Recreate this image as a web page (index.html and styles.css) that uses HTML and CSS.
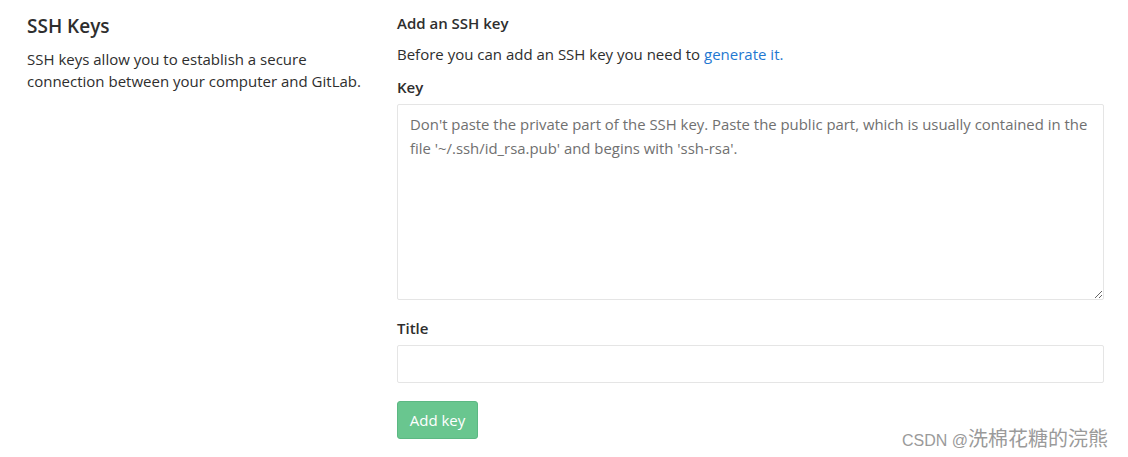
FILE: index.html
```html
<!DOCTYPE html>
<html>
<head>
<meta charset="utf-8">
<link rel="stylesheet" href="styles.css">
</head>
<body>
<div class="page">
  <div class="side">
    <h4 class="side-title">SSH Keys</h4>
    <p class="side-text">SSH keys allow you to establish a secure connection between your computer and GitLab.</p>
  </div>
  <div class="main">
    <h5 class="main-title">Add an SSH key</h5>
    <p class="main-text">Before you can add an SSH key you need to <a class="link" href="#">generate it.</a></p>
    <label class="label">Key</label>
    <textarea class="key-area" placeholder="Don't paste the private part of the SSH key. Paste the public part, which is usually contained in the file '~/.ssh/id_rsa.pub' and begins with 'ssh-rsa'."></textarea>
    <label class="label label-title">Title</label>
    <input class="title-input" type="text">
    <div class="actions">
      <button class="btn">Add key</button>
    </div>
  </div>
</div>
<div class="watermark">CSDN @<span class="wm-cjk">洗棉花糖的浣熊</span></div>
</body>
</html>
```

FILE: styles.css
```css
html, body {
  margin: 0;
  padding: 0;
  background: #fff;
}
body {
  font-family: "Open Sans", "Noto Sans", sans-serif;
  font-size: 15px;
  color: #2e2e2e;
  width: 1128px;
  height: 457px;
  overflow: hidden;
  position: relative;
}
.page {
  display: flex;
  padding: 12px 24px 0 27px;
}
.side {
  width: 370px;
  flex: none;
}
.side-title {
  margin: 0 0 8px;
  font-size: 19px;
  font-weight: 600;
  line-height: 28px;
}
.side-text {
  margin: 0;
  width: 335px;
  line-height: 22px;
  font-size: 15px;
}
.main {
  width: 707px;
  flex: none;
  display: flex;
  flex-direction: column;
}
.main-title {
  margin: 0 0 9px;
  font-size: 15px;
  font-weight: 600;
  line-height: 22px;
}
.main-text {
  margin: 0 0 11px;
  line-height: 22px;
}
.link {
  color: #1f78d1;
  text-decoration: none;
}
.label {
  font-weight: 600;
  line-height: 22px;
  margin-bottom: 6px;
  display: block;
}
.label-title {
  margin-top: 17px;
}
.key-area {
  box-sizing: border-box;
  width: 707px;
  height: 196px;
  border: 1px solid #e5e5e5;
  border-radius: 2px;
  padding: 7px 12px;
  font-family: inherit;
  font-size: 14.9px;
  line-height: 24px;
  color: #2e2e2e;
  resize: vertical;
  outline: none;
}
.key-area::placeholder {
  color: #707070;
}
.title-input {
  box-sizing: border-box;
  width: 707px;
  height: 38px;
  border: 1px solid #e5e5e5;
  border-radius: 2px;
  padding: 6px 10px;
  font-family: inherit;
  font-size: 15px;
  outline: none;
}
.actions {
  margin-top: 18px;
}
.btn {
  box-sizing: border-box;
  height: 38px;
  width: 81px;
  border: 1px solid #5cb883;
  background: #69c68f;
  color: #fff;
  border-radius: 3px;
  font-family: inherit;
  font-size: 15px;
  padding: 0;
}
.watermark {
  position: absolute;
  left: 902px;
  top: 426px;
  font-family: "Liberation Sans", "Noto Sans CJK SC", sans-serif;
  font-size: 16px;
  color: #9a9a9a;
  line-height: 24px;
}
.wm-cjk {
  font-family: "Noto Sans CJK SC", sans-serif;
  font-size: 20px;
}
```
